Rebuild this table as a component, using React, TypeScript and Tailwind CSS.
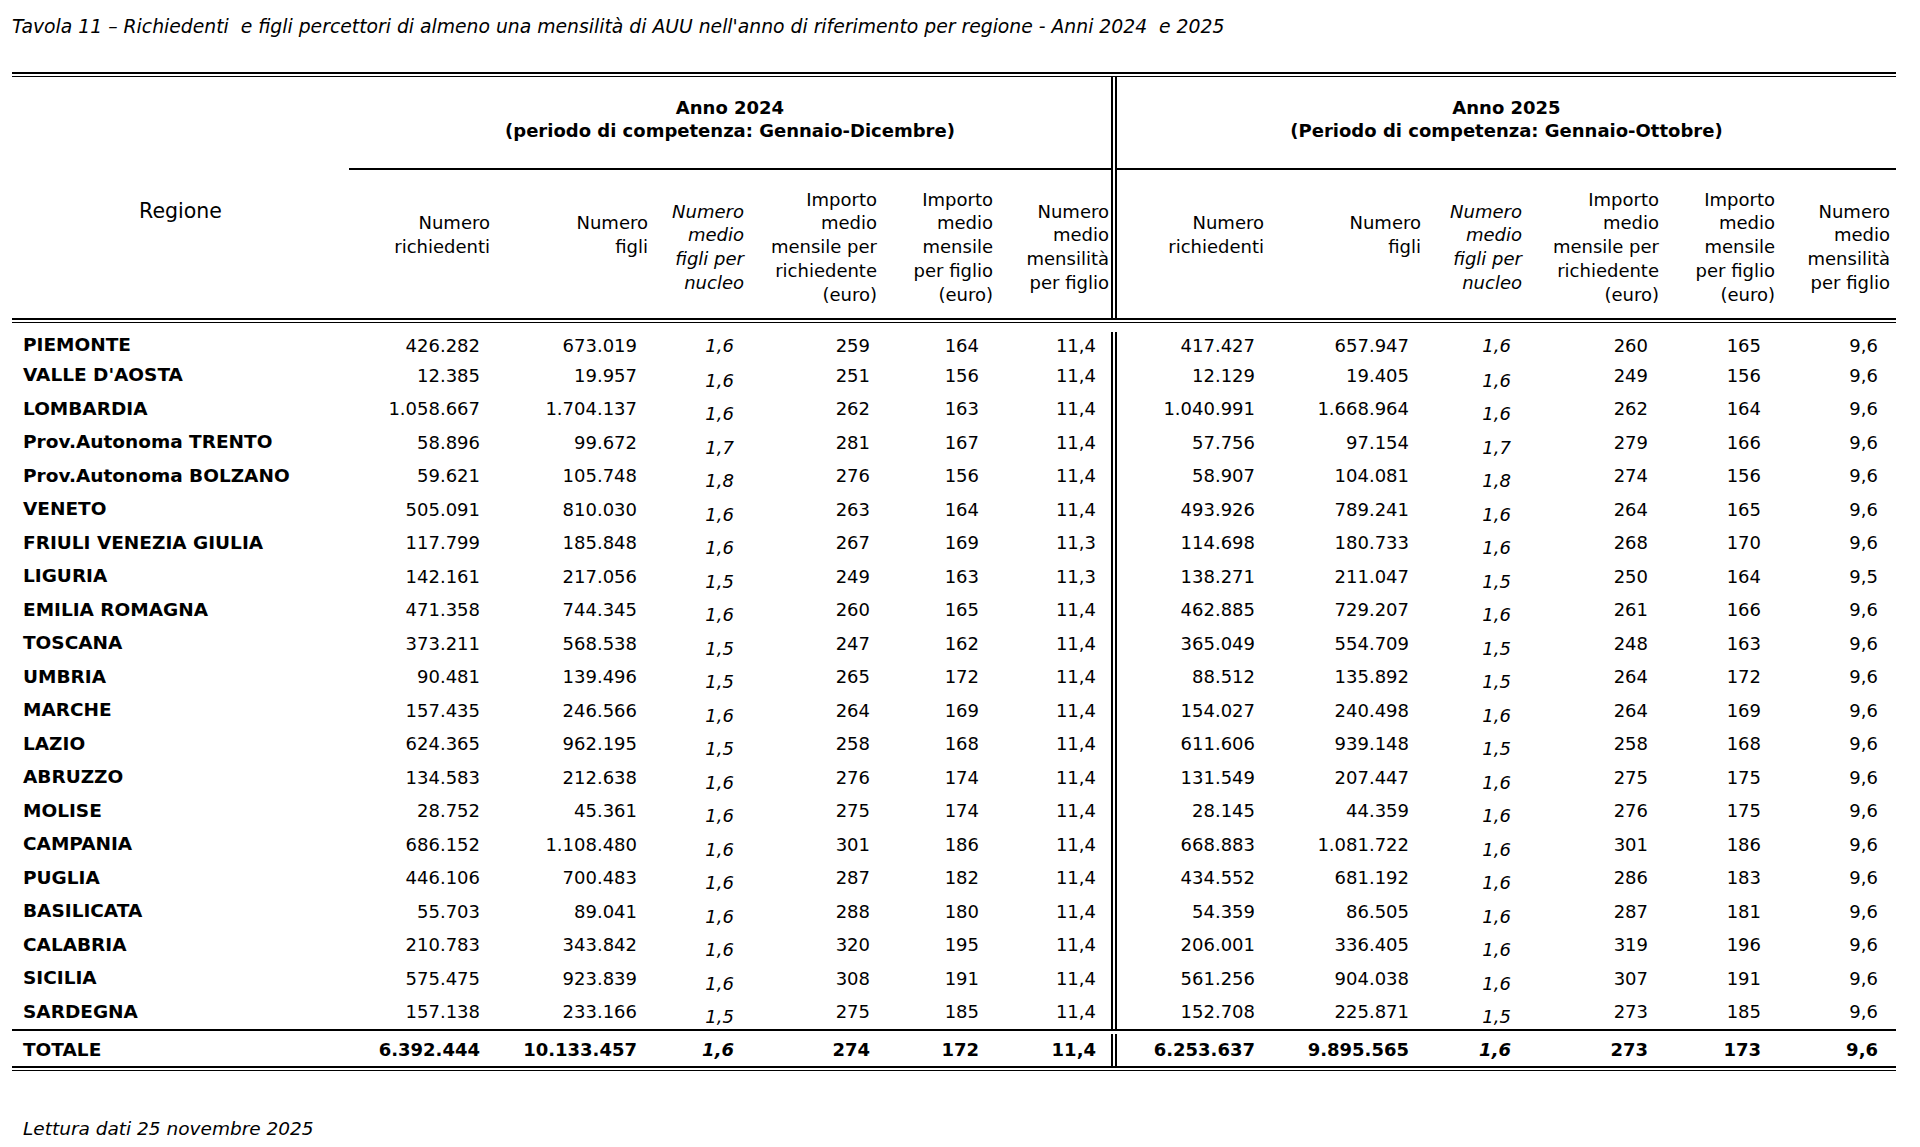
import React from 'react';

type Col = { w: string; hp: string; dp: string };

const COLS_24: Col[] = [
  { w: 'w-[146px]', hp: 'pr-[5px]', dp: 'pr-[15px]' },
  { w: 'w-[158px]', hp: 'pr-[5px]', dp: 'pr-[16px]' },
  { w: 'w-[94px]', hp: 'pr-[3px]', dp: 'pr-[13px]' },
  { w: 'w-[134px]', hp: 'pr-[4px]', dp: 'pr-[11px]' },
  { w: 'w-[116px]', hp: 'pr-[4px]', dp: 'pr-[18px]' },
  { w: 'w-[114px]', hp: 'pr-[2px]', dp: 'pr-[15px]' },
];

const COLS_25: Col[] = [
  { w: 'w-[151px]', hp: 'pr-[4px]', dp: 'pr-[13px]' },
  { w: 'w-[157px]', hp: 'pr-[4px]', dp: 'pr-[16px]' },
  { w: 'w-[101px]', hp: 'pr-[4px]', dp: 'pr-[15px]' },
  { w: 'w-[137px]', hp: 'pr-[4px]', dp: 'pr-[15px]' },
  { w: 'w-[116px]', hp: 'pr-[4px]', dp: 'pr-[18px]' },
  { w: 'w-[117px]', hp: 'pr-[6px]', dp: 'pr-[18px]' },
];

// header lines per column; the two "Numero ..." ones carry an empty third line
const HEADERS: { lines: string[]; italic?: boolean; pad?: boolean }[] = [
  { lines: ['Numero', 'richiedenti'], pad: true },
  { lines: ['Numero', 'figli'], pad: true },
  { lines: ['Numero', 'medio', 'figli per', 'nucleo'], italic: true },
  { lines: ['Importo', 'medio', 'mensile per', 'richiedente', '(euro)'] },
  { lines: ['Importo', 'medio', 'mensile', 'per figlio', '(euro)'] },
  { lines: ['Numero', 'medio', 'mensilità', 'per figlio'] },
];

type Row = [string, string[], string[]];

const ROWS: Row[] = [
  ['PIEMONTE', ['426.282', '673.019', '1,6', '259', '164', '11,4'], ['417.427', '657.947', '1,6', '260', '165', '9,6']],
  ["VALLE D'AOSTA", ['12.385', '19.957', '1,6', '251', '156', '11,4'], ['12.129', '19.405', '1,6', '249', '156', '9,6']],
  ['LOMBARDIA', ['1.058.667', '1.704.137', '1,6', '262', '163', '11,4'], ['1.040.991', '1.668.964', '1,6', '262', '164', '9,6']],
  ['Prov.Autonoma TRENTO', ['58.896', '99.672', '1,7', '281', '167', '11,4'], ['57.756', '97.154', '1,7', '279', '166', '9,6']],
  ['Prov.Autonoma BOLZANO', ['59.621', '105.748', '1,8', '276', '156', '11,4'], ['58.907', '104.081', '1,8', '274', '156', '9,6']],
  ['VENETO', ['505.091', '810.030', '1,6', '263', '164', '11,4'], ['493.926', '789.241', '1,6', '264', '165', '9,6']],
  ['FRIULI VENEZIA GIULIA', ['117.799', '185.848', '1,6', '267', '169', '11,3'], ['114.698', '180.733', '1,6', '268', '170', '9,6']],
  ['LIGURIA', ['142.161', '217.056', '1,5', '249', '163', '11,3'], ['138.271', '211.047', '1,5', '250', '164', '9,5']],
  ['EMILIA ROMAGNA', ['471.358', '744.345', '1,6', '260', '165', '11,4'], ['462.885', '729.207', '1,6', '261', '166', '9,6']],
  ['TOSCANA', ['373.211', '568.538', '1,5', '247', '162', '11,4'], ['365.049', '554.709', '1,5', '248', '163', '9,6']],
  ['UMBRIA', ['90.481', '139.496', '1,5', '265', '172', '11,4'], ['88.512', '135.892', '1,5', '264', '172', '9,6']],
  ['MARCHE', ['157.435', '246.566', '1,6', '264', '169', '11,4'], ['154.027', '240.498', '1,6', '264', '169', '9,6']],
  ['LAZIO', ['624.365', '962.195', '1,5', '258', '168', '11,4'], ['611.606', '939.148', '1,5', '258', '168', '9,6']],
  ['ABRUZZO', ['134.583', '212.638', '1,6', '276', '174', '11,4'], ['131.549', '207.447', '1,6', '275', '175', '9,6']],
  ['MOLISE', ['28.752', '45.361', '1,6', '275', '174', '11,4'], ['28.145', '44.359', '1,6', '276', '175', '9,6']],
  ['CAMPANIA', ['686.152', '1.108.480', '1,6', '301', '186', '11,4'], ['668.883', '1.081.722', '1,6', '301', '186', '9,6']],
  ['PUGLIA', ['446.106', '700.483', '1,6', '287', '182', '11,4'], ['434.552', '681.192', '1,6', '286', '183', '9,6']],
  ['BASILICATA', ['55.703', '89.041', '1,6', '288', '180', '11,4'], ['54.359', '86.505', '1,6', '287', '181', '9,6']],
  ['CALABRIA', ['210.783', '343.842', '1,6', '320', '195', '11,4'], ['206.001', '336.405', '1,6', '319', '196', '9,6']],
  ['SICILIA', ['575.475', '923.839', '1,6', '308', '191', '11,4'], ['561.256', '904.038', '1,6', '307', '191', '9,6']],
  ['SARDEGNA', ['157.138', '233.166', '1,5', '275', '185', '11,4'], ['152.708', '225.871', '1,5', '273', '185', '9,6']],
];

const TOTAL: Row = ['TOTALE', ['6.392.444', '10.133.457', '1,6', '274', '172', '11,4'], ['6.253.637', '9.895.565', '1,6', '273', '173', '9,6']];

function DoubleRule() {
  return (
    <div className="flex flex-col">
      <div className="h-[2px] bg-black" />
      <div className="h-[1px] mt-[2px] bg-black" />
    </div>
  );
}

function Separator() {
  return <div className="w-[6px] shrink-0 self-stretch border-x-2 border-black" />;
}

function YearHeader({ title, period, cols }: { title: string; period: string; cols: Col[] }) {
  return (
    <div className="flex flex-col">
      <div className="h-[91px] pt-[19px] text-center font-bold leading-[23px]">
        <div>{title}</div>
        <div>{period}</div>
      </div>
      <div className="h-[2px] bg-black" />
      <div className="flex h-[148px]">
        {cols.map((c, i) => {
          const h = HEADERS[i];
          return (
            <div
              key={i}
              className={`${c.w} ${c.hp} shrink-0 flex items-center justify-end pt-[6px] text-right leading-[23.75px] whitespace-nowrap ${h.italic ? 'italic' : ''}`}
            >
              <div className={h.pad ? 'pb-[24px]' : ''}>
                {h.lines.map((l, j) => (
                  <div key={j}>{l}</div>
                ))}
              </div>
            </div>
          );
        })}
      </div>
    </div>
  );
}

function Cells({ values, cols, shift, bold }: { values: string[]; cols: Col[]; shift: boolean; bold: boolean }) {
  return (
    <>
      {values.map((v, i) => (
        <div
          key={i}
          className={`${cols[i].w} ${cols[i].dp} shrink-0 flex items-center justify-end whitespace-nowrap ${bold ? 'font-bold' : ''} ${i === 2 ? 'italic' : ''} ${i === 2 && shift ? 'translate-y-[5px]' : ''}`}
        >
          {v}
        </div>
      ))}
    </>
  );
}

function DataRow({ row, height, shift, bold }: { row: Row; height: string; shift: boolean; bold: boolean }) {
  const [name, a, b] = row;
  return (
    <div className={`flex ${height}`}>
      <div className="w-[337px] shrink-0 pl-[11px] flex items-center font-bold text-[18.5px] whitespace-nowrap">{name}</div>
      <Cells values={a} cols={COLS_24} shift={shift} bold={bold} />
      <Separator />
      <Cells values={b} cols={COLS_25} shift={shift} bold={bold} />
    </div>
  );
}

export default function App() {
  return (
    <div className="min-h-screen w-[1920px] bg-white text-black font-['DejaVu_Sans',Verdana,sans-serif] text-[18px]">
      <div className="pl-[12px] pt-[14px] text-[18.8px] leading-[26px] italic whitespace-nowrap">
        Tavola 11 – Richiedenti&nbsp; e figli percettori di almeno una mensilità di AUU nell'anno di riferimento per regione - Anni 2024&nbsp; e 2025
      </div>

      <div className="ml-[12px] mt-[32px] w-[1884px]">
        <DoubleRule />

        {/* header block */}
        <div className="flex h-[241px]">
          <div className="w-[337px] shrink-0 pt-[120px] text-center text-[20.5px] leading-[28px]">Regione</div>
          <div className="w-[762px] shrink-0">
            <YearHeader title="Anno 2024" period="(periodo di competenza: Gennaio-Dicembre)" cols={COLS_24} />
          </div>
          <Separator />
          <div className="w-[779px] shrink-0">
            <YearHeader title="Anno 2025" period="(Periodo di competenza: Gennaio-Ottobre)" cols={COLS_25} />
          </div>
        </div>

        <DoubleRule />

        {/* body */}
        <div className="flex flex-col">
          {ROWS.map((r, i) => (
            <DataRow
              key={r[0]}
              row={r}
              height={i === 0 ? 'h-[35.5px] pt-[9px]' : 'h-[33.5px]'}
              shift={i > 0}
              bold={false}
            />
          ))}
        </div>

        <div className="h-[2px] bg-black" />
        <DataRow row={TOTAL} height="h-[35px] pt-[3px]" shift={false} bold={true} />
        <DoubleRule />
      </div>

      <div className="mt-[44px] pl-[23px] text-[18.5px] leading-[27px] italic">Lettura dati 25 novembre 2025</div>
    </div>
  );
}
